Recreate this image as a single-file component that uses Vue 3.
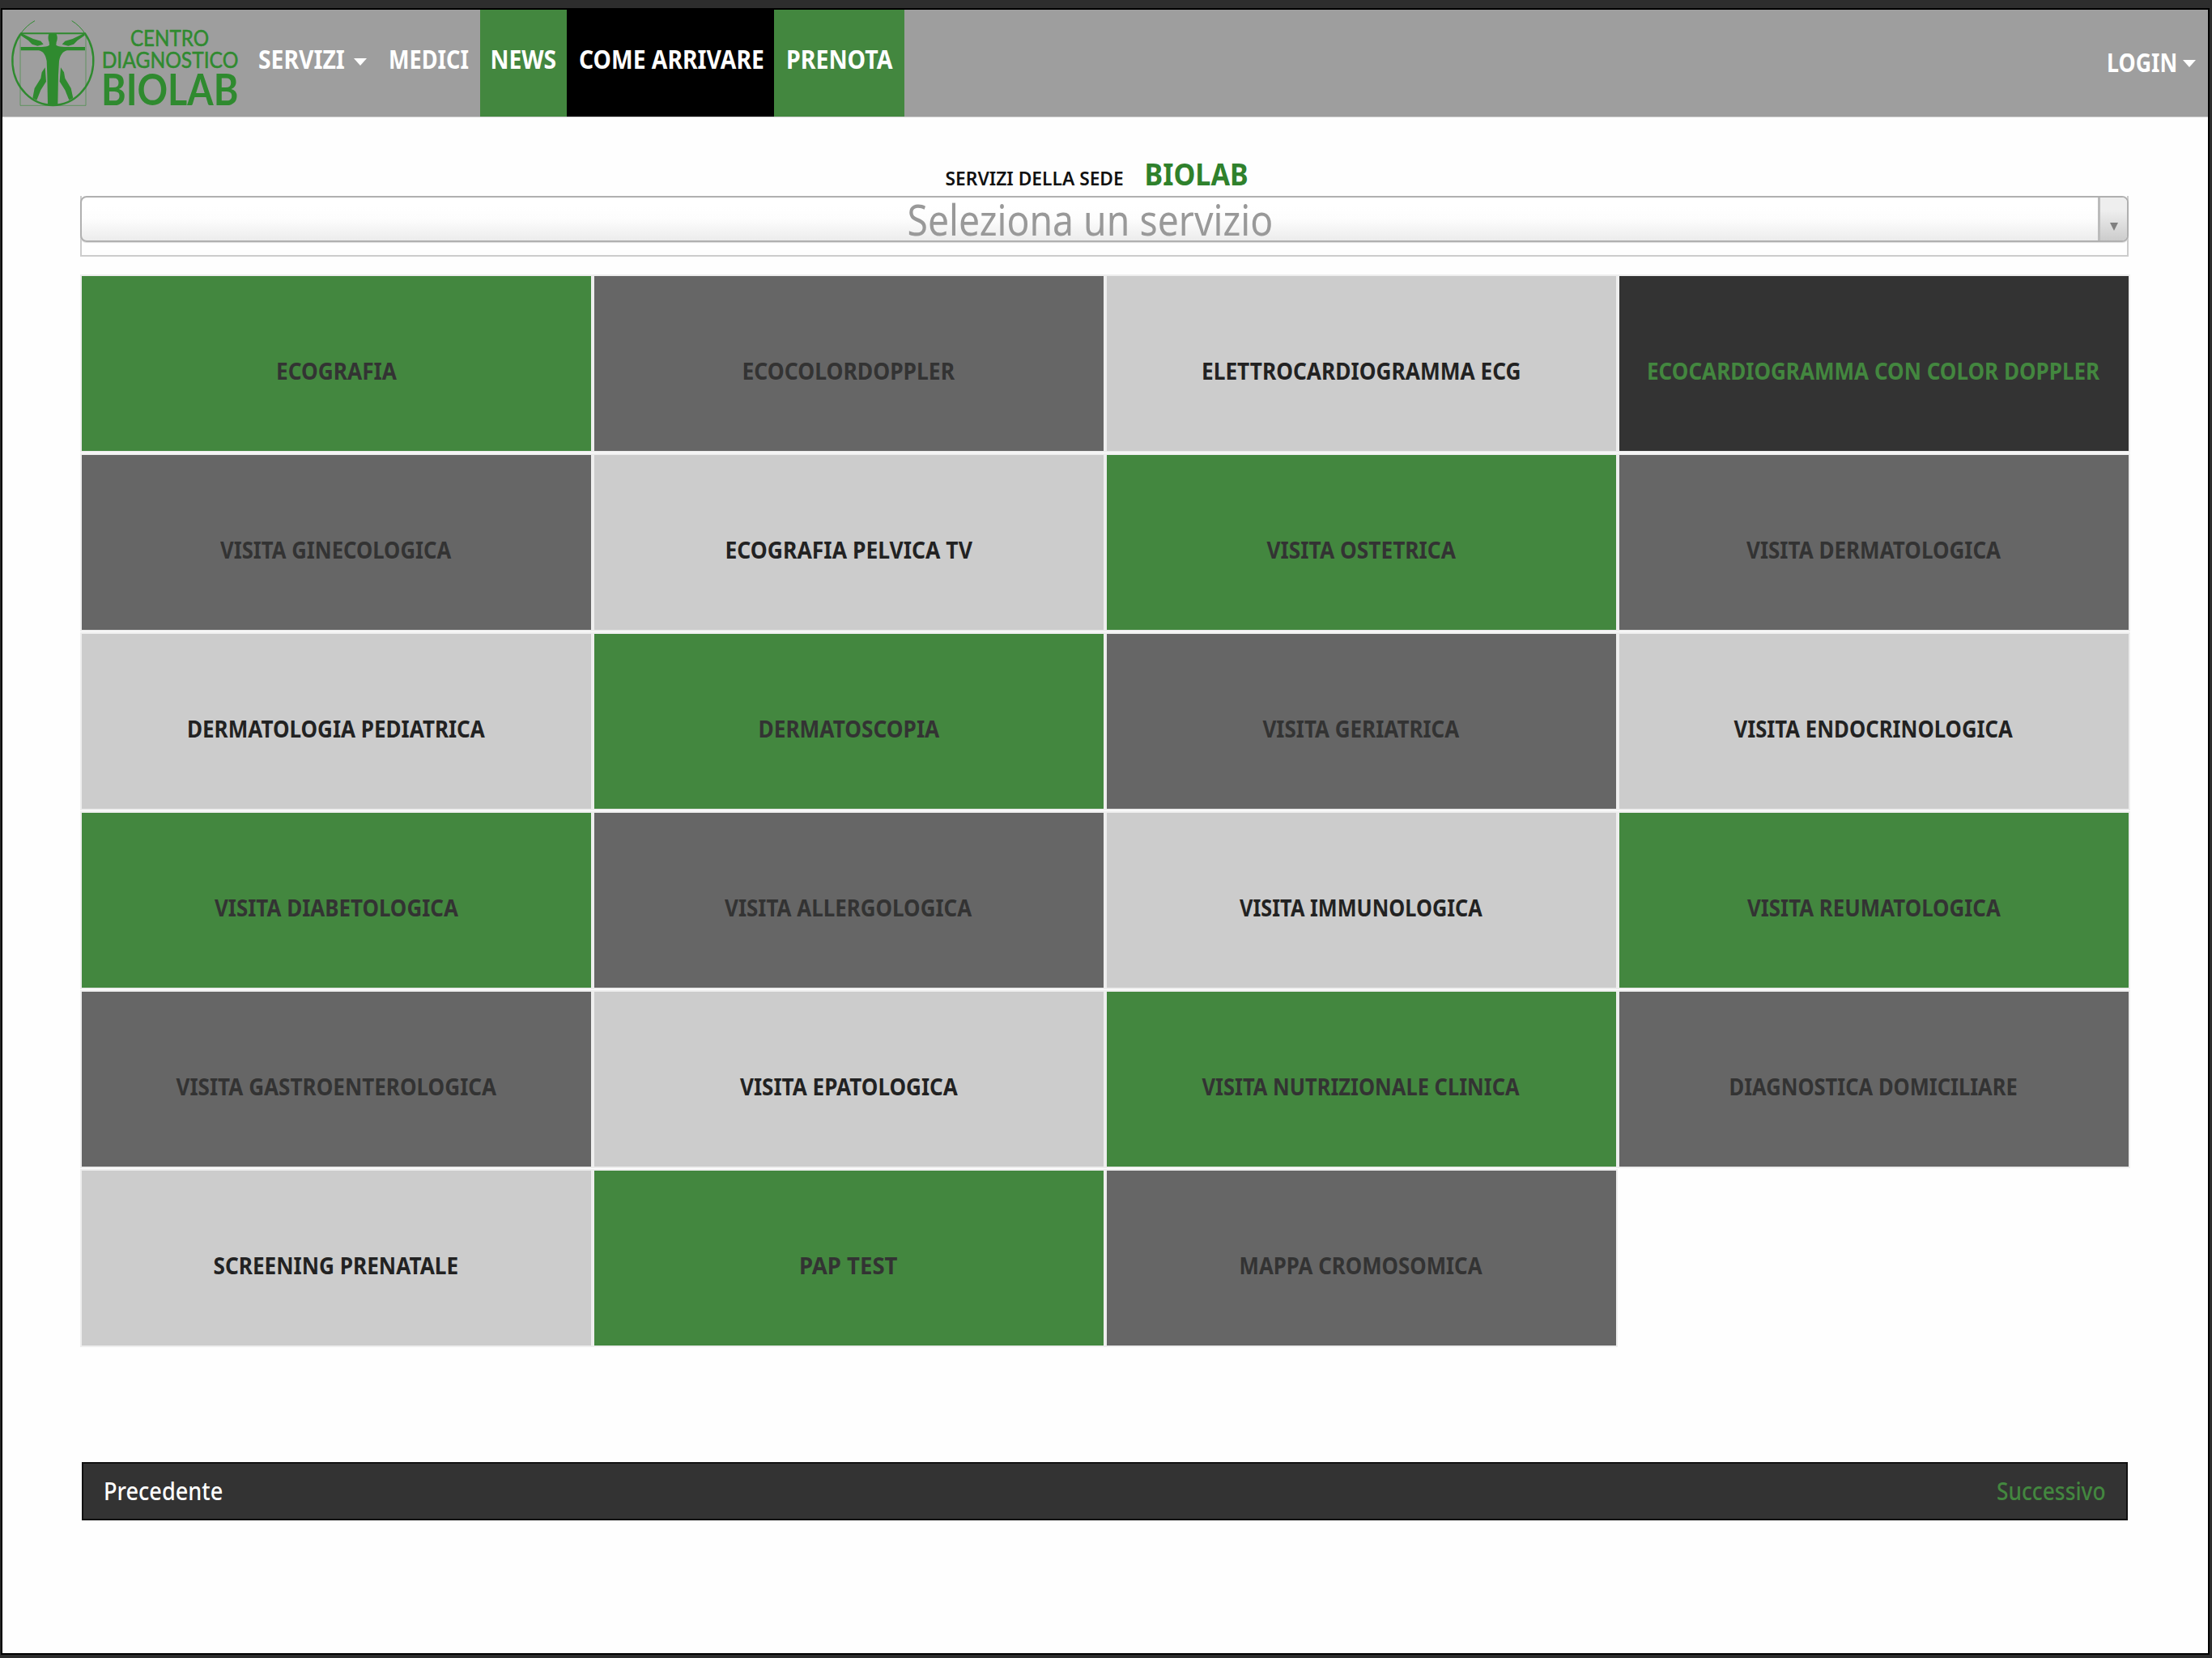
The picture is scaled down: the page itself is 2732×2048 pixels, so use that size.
<template>
  <div class="window">
    <div class="page">
      <header class="navbar">
        <svg class="logo" width="300" height="132" viewBox="10 36 900 396">
          <g fill="none" stroke="#2f8a2f">
            <path stroke-width="3" opacity="0.55" d="M76 124V391H319V124" />
            <path stroke-width="6" d="M76 124H319" />
            <path stroke-width="3" d="M130 77A150 165 0 0 0 77 126M267 77A150 165 0 0 1 317 126" />
            <path stroke-width="7" d="M77 126A150 165 0 1 0 317 126" />
          </g>
          <g fill="#2f8a2f">
            <path d="M182 126H210C215 135 214 148 210 156L209 167C218 173 228 173 238 174H316V187H250C234 190 224 204 220 226L217 278L215 388Q196 394 178 388L176 278L174 226C170 204 162 190 144 187H78V174H156C166 173 176 173 184 167L183 156C179 148 178 135 182 126Z" />
            <path d="M78 122L124 144L152 152L162 164L140 170L120 164L106 150L78 131Z" />
            <path d="M315 122L270 144L242 152L231 164L254 170L274 164L288 150L315 131Z" />
            <path d="M168 250L172 302L152 334L137 371L122 364L129 327L152 290L156 268Z" />
            <path d="M226 250L222 302L242 334L257 371L272 364L264 327L242 290L238 268Z" />
          </g>
          <g class="logo-text" fill="#2f8a2f">
            <text x="484" y="170" font-size="79" textLength="291" lengthAdjust="spacingAndGlyphs">CENTRO</text>
            <text x="378" y="251" font-size="79" textLength="506" lengthAdjust="spacingAndGlyphs">DIAGNOSTICO</text>
            <text class="logo-name" x="376" y="391" font-size="161" textLength="508" lengthAdjust="spacingAndGlyphs">BIOLAB</text>
          </g>
        </svg>

        <nav class="menu">
          <a class="menu-item servizi">
            <span class="menu-label"><span v-fit="107" class="txt">SERVIZI</span></span>
            <i class="caret"></i>
          </a>
          <a class="menu-item medici"><span v-fit="99" class="txt">MEDICI</span></a>
          <a class="menu-item news"><span v-fit="82" class="txt">NEWS</span></a>
          <a class="menu-item arrivare"><span v-fit="229" class="txt">COME ARRIVARE</span></a>
          <a class="menu-item prenota"><span v-fit="132" class="txt">PRENOTA</span></a>
        </nav>

        <a class="login">
          <span v-fit="87" class="txt">LOGIN</span>
          <i class="caret"></i>
        </a>
      </header>

      <main class="container">
        <h1 class="heading">
          <span class="heading-label"><span v-fit="220" class="txt">SERVIZI DELLA SEDE</span></span>
          <span class="heading-name"><span v-fit="128" class="txt">BIOLAB</span></span>
        </h1>

        <div class="select-wrap">
          <div class="select">
            <div class="select-text"><span v-fit="452" class="txt">Seleziona un servizio</span></div>
            <div class="select-arrow"><i></i></div>
          </div>
        </div>

        <div class="grid">
          <a v-for="s in servizi" :key="s.nome" class="tile" :class="s.tipo">
            <span v-fit="s.w" class="txt">{{ s.nome }}</span>
          </a>
        </div>

        <footer class="pager">
          <a class="prev"><span v-fit="147" class="txt">Precedente</span></a>
          <a class="next"><span v-fit="135" class="txt">Successivo</span></a>
        </footer>
      </main>
    </div>
  </div>
</template>

<script setup>
import { ref } from 'vue'

// stringe il testo alla larghezza indicata (px)
const vFit = {
  mounted(el, { value }) {
    el.style.transform = `scaleX(${value / el.offsetWidth})`
  }
}

const servizi = ref([
  { nome: 'ECOGRAFIA', tipo: 'verde', w: 149 },
  { nome: 'ECOCOLORDOPPLER', tipo: 'scuro', w: 263 },
  { nome: 'ELETTROCARDIOGRAMMA ECG', tipo: 'chiaro', w: 395 },
  { nome: 'ECOCARDIOGRAMMA CON COLOR DOPPLER', tipo: 'nero', w: 559 },
  { nome: 'VISITA GINECOLOGICA', tipo: 'scuro', w: 285 },
  { nome: 'ECOGRAFIA PELVICA TV', tipo: 'chiaro', w: 305 },
  { nome: 'VISITA OSTETRICA', tipo: 'verde', w: 233 },
  { nome: 'VISITA DERMATOLOGICA', tipo: 'scuro', w: 314 },
  { nome: 'DERMATOLOGIA PEDIATRICA', tipo: 'chiaro', w: 368 },
  { nome: 'DERMATOSCOPIA', tipo: 'verde', w: 224 },
  { nome: 'VISITA GERIATRICA', tipo: 'scuro', w: 243 },
  { nome: 'VISITA ENDOCRINOLOGICA', tipo: 'chiaro', w: 344 },
  { nome: 'VISITA DIABETOLOGICA', tipo: 'verde', w: 301 },
  { nome: 'VISITA ALLERGOLOGICA', tipo: 'scuro', w: 305 },
  { nome: 'VISITA IMMUNOLOGICA', tipo: 'chiaro', w: 300 },
  { nome: 'VISITA REUMATOLOGICA', tipo: 'verde', w: 313 },
  { nome: 'VISITA GASTROENTEROLOGICA', tipo: 'scuro', w: 396 },
  { nome: 'VISITA EPATOLOGICA', tipo: 'chiaro', w: 269 },
  { nome: 'VISITA NUTRIZIONALE CLINICA', tipo: 'verde', w: 392 },
  { nome: 'DIAGNOSTICA DOMICILIARE', tipo: 'scuro', w: 356 },
  { nome: 'SCREENING PRENATALE', tipo: 'chiaro', w: 303 },
  { nome: 'PAP TEST', tipo: 'verde', w: 121 },
  { nome: 'MAPPA CROMOSOMICA', tipo: 'scuro', w: 300 }
])
</script>

<style>
body {
  margin: 0;
  background: #2d2d2d;
}
</style>

<style scoped>
.window {
  box-sizing: border-box;
  width: 2732px;
  height: 2048px;
  padding: 12px 5px 6px 3px;
  overflow: hidden;
  background: #2d2d2d;
  font-family: "Noto Sans", "Open Sans", sans-serif;
}

.page {
  height: 2030px;
  background: #fefefe;
  box-shadow: 0 0 0 2px #000;
}

.txt {
  display: inline-block;
  flex: none;
  white-space: nowrap;
}

/* barra in alto */
.navbar {
  display: flex;
  height: 132px;
  background: #9e9e9e;
  border-bottom: 1px solid #d2d2d2;
  color: #fff;
  font-size: 32px;
  font-weight: 700;
}

.logo {
  flex: none;
}

.logo-text {
  font-family: Lato, sans-serif;
  font-weight: 400;
  stroke: #2f8a2f;
  stroke-width: 1.5px;
}

.logo-name {
  font-weight: 700;
  stroke: none;
}

.menu {
  display: flex;
}

.menu-item {
  display: flex;
  box-sizing: border-box;
  align-items: center;
  justify-content: center;
  height: 132px;
  padding-bottom: 11px;
}

.servizi {
  width: 160px;
  padding-left: 5px;
  gap: 11px;
}

.menu-label {
  display: flex;
  justify-content: center;
  width: 107px;
}

.medici {
  width: 130px;
  padding-left: 2px;
}

.news {
  width: 107px;
  background: #43873f;
}

.arrivare {
  width: 256px;
  padding-left: 2px;
  background: #000;
}

.prenota {
  width: 161px;
  background: #43873f;
}

.caret {
  width: 0;
  height: 0;
  margin-top: 8px;
  border: 8px solid transparent;
  border-top: 9px solid #fff;
  border-bottom: 0;
}

.login {
  display: flex;
  align-items: center;
  gap: 7px;
  height: 128px;
  margin-left: auto;
  padding-right: 15px;
}

.login .txt {
  transform-origin: right center;
}

.login .caret {
  margin-top: 5px;
}

/* contenuto */
.container {
  width: 2530px;
  margin: 0 auto 0 96px;
}

.heading {
  display: flex;
  align-items: baseline;
  gap: 26px;
  height: 49px;
  margin: 0;
  padding: 48px 0 0 1069px;
  font-size: 37px;
  line-height: 44px;
}

.heading-label,
.heading-name {
  display: flex;
  justify-content: center;
}

.heading-label {
  width: 220px;
  color: #111;
  font-size: 23.5px;
  font-weight: 600;
}

.heading-name {
  width: 128px;
  color: #2f812c;
}

.select-wrap {
  box-sizing: border-box;
  height: 75px;
  border: 2px solid #ccc;
  border-top: 0;
}

.select {
  display: flex;
  box-sizing: border-box;
  height: 57px;
  margin: 0 -2px;
  border: 2px solid #b0b0b0;
  border-radius: 8px;
  overflow: hidden;
  background: linear-gradient(#fff 20%, #fdfdfd 50%, #ececec 100%);
  box-shadow: 0 1px 1px #ddd;
}

.select-text {
  display: flex;
  flex: 1;
  align-items: center;
  justify-content: center;
  color: #999;
  font-size: 53px;
  line-height: 53px;
}

.select-arrow {
  display: flex;
  align-items: flex-end;
  justify-content: center;
  box-sizing: border-box;
  width: 36px;
  padding-bottom: 12px;
  border-left: 3px solid #bbb;
  background: linear-gradient(#eee 30%, #ccc 100%);
}

.select-arrow i {
  border: 5.5px solid transparent;
  border-top: 10px solid #808080;
  border-bottom: 0;
}

.grid {
  display: grid;
  grid-template-columns: repeat(4, 629px);
  grid-auto-rows: 216px;
  gap: 5px 4px;
  margin: 24px 0 0 1.5px;
}

.tile {
  display: flex;
  align-items: center;
  justify-content: center;
  box-sizing: border-box;
  padding-top: 18px;
  box-shadow: 0 0 0 2px #eee;
  color: #333;
  font-size: 28px;
  font-weight: 700;
}

.verde {
  background: #43873f;
}

.scuro {
  background: #666;
}

.chiaro {
  background: #ccc;
  color: #222;
}

.nero {
  background: #333;
  color: #43873f;
}

.pager {
  display: flex;
  align-items: center;
  justify-content: space-between;
  box-sizing: border-box;
  width: 2527px;
  height: 72px;
  margin: 144px 0 0 2px;
  padding: 0 25px 3px;
  border: 2px solid #111;
  background: #333;
  font-size: 31px;
  font-weight: 500;
}

.prev {
  color: #fff;
}

.prev .txt {
  transform-origin: left center;
}

.next {
  color: #43873f;
}

.next .txt {
  transform-origin: right center;
}
</style>
